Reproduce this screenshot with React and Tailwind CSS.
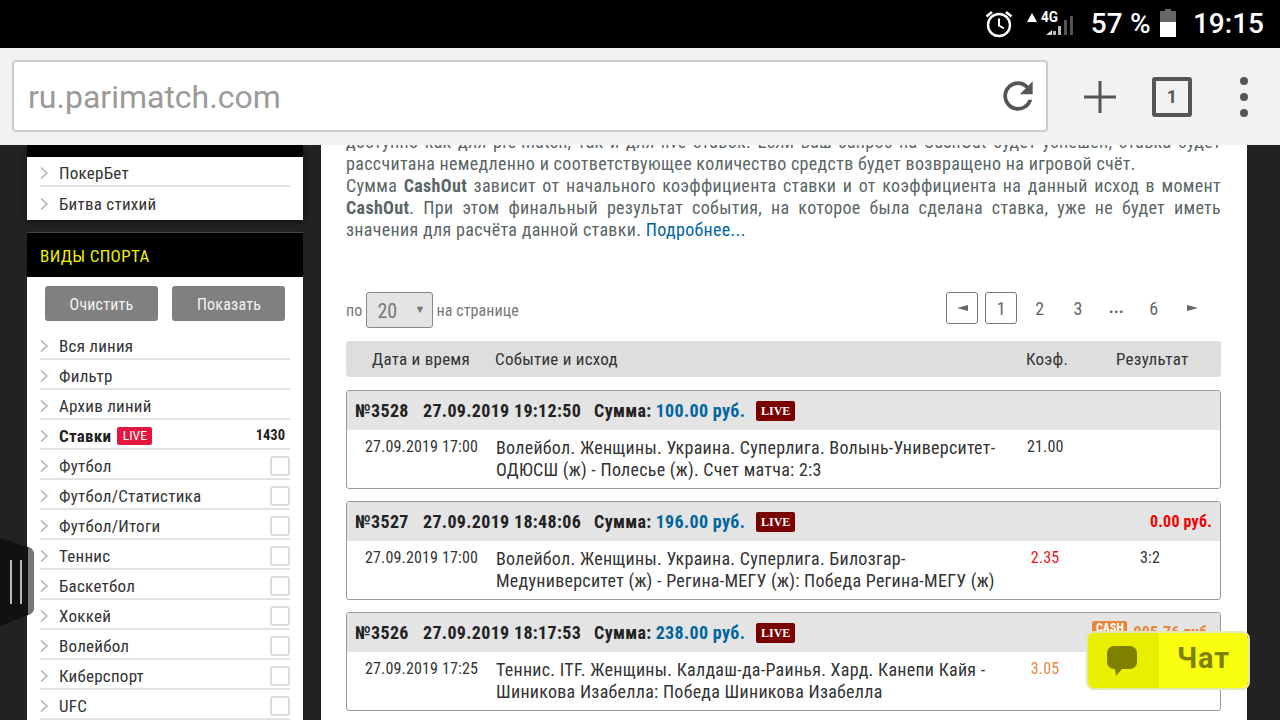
const condensed = "font-['Roboto',sans-serif] [font-stretch:80%]";
const regular = "font-['Roboto',sans-serif] [font-stretch:100%]";

const topItems = ["ПокерБет", "Битва стихий"];
const sports = ["Футбол", "Футбол/Статистика", "Футбол/Итоги", "Теннис", "Баскетбол", "Хоккей", "Волейбол", "Киберспорт", "UFC"];

const bets = [
  {
    id: "№3528", time: "27.09.2019 19:12:50", sum: "100.00 руб.", date: "27.09.2019 17:00",
    l1: "Волейбол. Женщины. Украина. Суперлига. Волынь-Университет-", l2: "ОДЮСШ (ж) - Полесье (ж). Счет матча: 2:3",
    coef: "21.00", coefCls: "text-[#333]", res: "",
  },
  {
    id: "№3527", time: "27.09.2019 18:48:06", sum: "196.00 руб.", date: "27.09.2019 17:00",
    l1: "Волейбол. Женщины. Украина. Суперлига. Билозгар-", l2: "Медуниверситет (ж) - Регина-МЕГУ (ж): Победа Регина-МЕГУ (ж)",
    coef: "2.35", coefCls: "text-[#e8141c]", res: "3:2", win: "0.00 руб.", winCls: "text-[#f00000]",
  },
  {
    id: "№3526", time: "27.09.2019 18:17:53", sum: "238.00 руб.", date: "27.09.2019 17:25",
    l1: "Теннис. ITF. Женщины. Калдаш-да-Раинья. Хард. Канепи Кайя -", l2: "Шиникова Изабелла: Победа Шиникова Изабелла",
    coef: "3.05", coefCls: "text-[#e8873a]", res: "", win: "905.76 руб.", winCls: "text-[#e8873a]", cash: true,
  },
];

function Chevron() {
  return (
    <svg width="8" height="12" viewBox="0 0 8 12" className="shrink-0" fill="none">
      <path d="M1 0.5 L7 6 L1 11.5" stroke="#aaa" strokeWidth="1.3" />
    </svg>
  );
}

function Row({ label, last, children }) {
  return (
    <div className={`flex items-center h-[30px] pt-[3px] ${last ? "" : "border-b-2 border-[#e2e2e2]"}`}>
      <Chevron />
      <span className="ml-[11px] mt-[2px] text-[17px] tracking-[0.25px] text-[#333]">{label}</span>
      {children}
    </div>
  );
}

function Checkbox() {
  return <div className="ml-auto w-[20px] h-[20px] bg-white border-2 border-[#ddd] rounded-[3px]" />;
}

function Sidebar() {
  return (
    <div className="w-[276px] shrink-0 ml-[27px] flex flex-col">
      <div className="h-[76px] bg-white shadow-[0_2px_6px_rgba(0,0,0,0.5)]">
        <div className="h-[12px] bg-black" />
        <div className="px-[13px]">
          {topItems.map((t, i) => (
            <Row key={t} label={t} last={i === 1} />
          ))}
        </div>
      </div>
      <div className="mt-[12px] bg-white flex-1">
        <div className="h-[45px] bg-black border-t border-[#444] flex items-center pl-[13px] pt-[3px] text-[#eef000] text-[17px] tracking-[0.35px]">ВИДЫ СПОРТА</div>
        <div className="flex justify-between px-[18px] pt-[9px] pb-[9px]">
          <div className="w-[113px] h-[35px] pt-[3px] rounded-[3px] bg-[#808080] text-[#f2f2f2] text-[16px] tracking-[0.2px] flex items-center justify-center">Очистить</div>
          <div className="w-[113px] h-[35px] pt-[3px] pl-[1px] rounded-[3px] bg-[#808080] text-[#f2f2f2] text-[16px] tracking-[0.2px] flex items-center justify-center">Показать</div>
        </div>
        <div className="px-[13px]">
          <Row label="Вся линия" />
          <Row label="Фильтр" />
          <Row label="Архив линий" />
          <div className="flex items-center h-[30px] pt-[3px] border-b-2 border-[#e2e2e2]">
            <Chevron />
            <span className="ml-[11px] mt-[2px] text-[17px] tracking-[0.25px] font-bold text-[#222]">Ставки</span>
            <span className="ml-[6px] h-[18px] w-[35px] rounded-[2px] bg-[#e3173e] text-white text-[13.5px] flex items-center justify-center">LIVE</span>
            <span className="ml-auto mr-[5px] text-[14.5px] font-bold text-[#222]">1430</span>
          </div>
          {sports.map((s) => (
            <Row key={s} label={s}>
              <Checkbox />
            </Row>
          ))}
        </div>
      </div>
    </div>
  );
}

function BetCard({ b }) {
  return (
    <div className="border border-[#999] rounded-[3px] h-[99px] mb-[12px] bg-white shrink-0 overflow-hidden">
      <div className="h-[39px] bg-[#e4e4e4] flex items-center pl-[8px] pr-[8px] text-[18px] tracking-[0.33px] font-bold text-[#222]">
        <span className="w-[68px]">{b.id}</span>
        <span>{b.time}</span>
        <span className="ml-[13px]">Сумма:</span>
        <span className="ml-[4px] text-[#00659f]">{b.sum}</span>
        <span className="ml-[11px] h-[20px] w-[39px] rounded-[2px] bg-[#7a0000] text-white text-[12px] tracking-normal font-['Liberation_Serif',serif] font-bold flex items-center justify-center">LIVE</span>
        {b.win && (
          <span className="ml-auto flex items-start">
            {b.cash && <span className="h-[14px] w-[35px] mr-[6px] rounded-[2px] bg-[#e8873a] text-white text-[12px] tracking-normal font-bold leading-[14px] text-center">CASH</span>}
            <span className={`text-[16px] tracking-[0.2px] ${b.winCls}`}>{b.win}</span>
          </span>
        )}
      </div>
      <div className="flex pt-[7px] text-[18px] tracking-[0.27px] leading-[22px] text-[#333]">
        <div className="w-[149px] pl-[18px] text-[16px] tracking-[0.15px] leading-[20px] shrink-0">{b.date}</div>
        <div className="w-[531px] shrink-0">
          <div>{b.l1}</div>
          <div>{b.l2}</div>
        </div>
        <div className={`w-[36px] text-center text-[16px] tracking-[0.15px] leading-[20px] shrink-0 ${b.coefCls}`}>{b.coef}</div>
        <div className="ml-[68px] w-[38px] text-center text-[16px] tracking-[0.15px] leading-[20px]">{b.res}</div>
      </div>
    </div>
  );
}

function PageBtn({ children, boxed, className = "" }) {
  return (
    <div className={`w-[32px] h-[32px] flex items-center justify-center text-[18px] text-[#666] rounded-[3px] ${boxed ? "border border-[#777]" : ""} ${className}`}>
      {children}
    </div>
  );
}

function Arrow({ right }) {
  return (
    <svg width="11" height="6" viewBox="0 0 11 6" fill="#666">
      <path d={right ? "M0 0 L11 3 L0 6 Z" : "M11 0 L0 3 L11 6 Z"} />
    </svg>
  );
}

function Main() {
  return (
    <div className="w-[926px] shrink-0 ml-[18px] bg-white pl-[25px] pr-[26px] flex flex-col overflow-hidden">
      <div className="text-[18px] tracking-[0.33px] leading-[22px] text-[#5a6566] text-justify -mt-[14px]">
        <p className="[text-align-last:justify]">доступно как для pre-match, так и для live ставок. Если ваш запрос на CashOut будет успешен, ставка будет</p>
        <p>рассчитана немедленно и соответствующее количество средств будет возвращено на игровой счёт.</p>
        <p>
          Сумма <b>CashOut</b> зависит от начального коэффициента ставки и от коэффициента на данный исход в момент <b>CashOut</b>. При этом финальный результат события, на которое была сделана ставка, уже не будет иметь значения для расчёта данной ставки. <span className="text-[#00659f]">Подробнее...</span>
        </p>
      </div>
      <div className="mt-[51px] flex items-start text-[#777] text-[16px] tracking-[0.1px]">
        <div className="flex items-center h-[36px]">
          <span className="pt-[2px]">по</span>
          <div className="ml-[4px] w-[67px] h-[36px] border border-[#888] rounded-[3px] bg-[#e4e4e4] flex items-center justify-between pl-[10px] pr-[7px] pt-[1px] text-[20px] text-[#777]">
            <span>20</span>
            <span className="text-[11px]">▼</span>
          </div>
          <span className="ml-[3px] pt-[2px]">на странице</span>
        </div>
        <div className="ml-auto mr-[13px] flex gap-[6.33px] items-center">
          <PageBtn boxed><Arrow /></PageBtn>
          <PageBtn boxed className="ml-[1px]">1</PageBtn>
          <PageBtn>2</PageBtn>
          <PageBtn>3</PageBtn>
          <PageBtn><b className="text-[17px]">...</b></PageBtn>
          <PageBtn className="-ml-[1px]">6</PageBtn>
          <PageBtn><Arrow right /></PageBtn>
        </div>
      </div>
      <div className="mt-[13px] mb-[13px] h-[36px] pt-[2px] shrink-0 rounded-[3px] bg-[#dedede] flex items-center text-[17px] tracking-[0.25px] text-[#333]">
        <span className="ml-[26px] w-[123px]">Дата и время</span>
        <span className="w-[531px]">Событие и исход</span>
        <span className="w-[90px]">Коэф.</span>
        <span>Результат</span>
      </div>
      {bets.map((b) => (
        <BetCard key={b.id} b={b} />
      ))}
    </div>
  );
}

function StatusBar() {
  return (
    <div className={`h-[48px] bg-black flex items-center justify-end text-white font-medium ${regular}`}>
      <svg width="30" height="30" viewBox="0 0 30 30" fill="none" stroke="#fff" strokeWidth="2.4">
        <circle cx="15" cy="16" r="11" />
        <path d="M15 9.500 V16.500 L20 19.500" strokeWidth="2" />
        <path d="M2.500 7.500 L8 3 M27.500 7.500 L22 3" strokeWidth="2.6" />
      </svg>
      <svg width="48" height="28" viewBox="0 0 48 28" className="ml-[13px]">
        <path d="M0 12 L5 3 L10 12 Z" fill="#fff" />
        <text x="14" y="12" fill="#fff" fontSize="14" fontWeight="700" fontFamily="Roboto, sans-serif" textLength="17" lengthAdjust="spacingAndGlyphs">4G</text>
        <path d="M19 25 L25 20 V25 Z" fill="#ddd" />
        <path d="M26 21 h3 v4 h-3z M31 16 h3 v9 h-3z" fill="#bbb" />
        <path d="M37 10 h3 v15 h-3z M43 6 h3 v19 h-3z" fill="#555" />
      </svg>
      <span className="ml-[16px] text-[28px] tracking-[0.2px]">57 %</span>
      <svg width="16" height="30" viewBox="0 0 16 30" className="ml-[9px]">
        <rect x="5" y="0" width="6" height="3" fill="#666" />
        <rect x="0" y="2" width="16" height="12" fill="#666" />
        <rect x="0" y="13" width="16" height="15" fill="#fff" />
      </svg>
      <span className="ml-[17px] mr-[16px] text-[28px]">19:15</span>
    </div>
  );
}

function Toolbar() {
  return (
    <div className={`h-[97px] bg-[#f2f2f2] flex items-center ${regular}`}>
      <div className="ml-[12px] w-[1036px] h-[72px] bg-white border-2 border-[#ccc] rounded-[4px] flex items-center pl-[14px] pr-[6px] -mt-[1px]">
        <span className="pt-[1px] text-[32px] text-[#9a9a9a]">ru.parimatch.com</span>
        <svg width="44" height="44" viewBox="0 0 24 24" className="ml-auto" fill="#555">
          <path d="M17.650 6.350A7.960 7.960 0 0 0 12 4a8 8 0 1 0 7.730 10h-2.080A6 6 0 1 1 12 6c1.660 0 3.140.690 4.220 1.780L13 11h7V4l-2.350 2.350z" />
        </svg>
      </div>
      <svg width="32" height="32" viewBox="0 0 32 32" className="ml-[36px]" fill="#555">
        <path d="M14.500 0h3v14.500h14.500v3H17.500v14.500h-3V17.500H0v-3h14.500z" />
      </svg>
      <div className="ml-[36px] w-[40px] h-[40px] border-[4px] border-[#555] rounded-[3px] flex items-center justify-center text-[18px] font-bold text-[#555]">1</div>
      <div className="ml-[48px] flex flex-col gap-[8px]">
        <span className="w-[8px] h-[8px] rounded-full bg-[#555]" />
        <span className="w-[8px] h-[8px] rounded-full bg-[#555]" />
        <span className="w-[8px] h-[8px] rounded-full bg-[#555]" />
      </div>
    </div>
  );
}

function ChatButton() {
  return (
    <div className="absolute left-[1086px] top-[631px] w-[164px] h-[59px] rounded-[8px] border-2 border-[#e6e6b0] overflow-hidden flex">
      <div className="w-[71px] pr-[4px] bg-[#e9ef00] flex items-center justify-center">
        <svg width="32" height="32" viewBox="0 0 32 32">
          <path d="M8 1h16a7 7 0 0 1 7 7v9a7 7 0 0 1-7 7H16l-6 7-1-7H8a7 7 0 0 1-7-7V8a7 7 0 0 1 7-7z" fill="#808000" />
        </svg>
      </div>
      <div className={`flex-1 bg-[#f8ff0f] flex items-center justify-center pb-[3px] text-[29px] font-bold tracking-[1px] text-[#808000] ${regular}`}>Чат</div>
    </div>
  );
}

function EdgeHandle() {
  return (
    <div className="absolute left-0 top-[538px] w-[35px] h-[88px]">
      <svg width="35" height="88" viewBox="0 0 35 88">
        <path d="M0 0 L28 9 Q34 11 34 17 V69 Q34 75 28 77 L0 88 Z" fill="#111" />
        <path d="M28 9 Q34 11 34 17 V69 Q34 75 28 77 Z" fill="#777" />
        <path d="M11 22 V66 M21 22 V66" stroke="#bbb" strokeWidth="2" />
      </svg>
    </div>
  );
}

export default function App() {
  return (
    <div className={`relative w-[1280px] h-[720px] overflow-hidden bg-[#222] ${condensed}`}>
      <StatusBar />
      <Toolbar />
      <div className="h-[575px] flex overflow-hidden">
        <Sidebar />
        <Main />
      </div>
      <EdgeHandle />
      <ChatButton />
    </div>
  );
}
